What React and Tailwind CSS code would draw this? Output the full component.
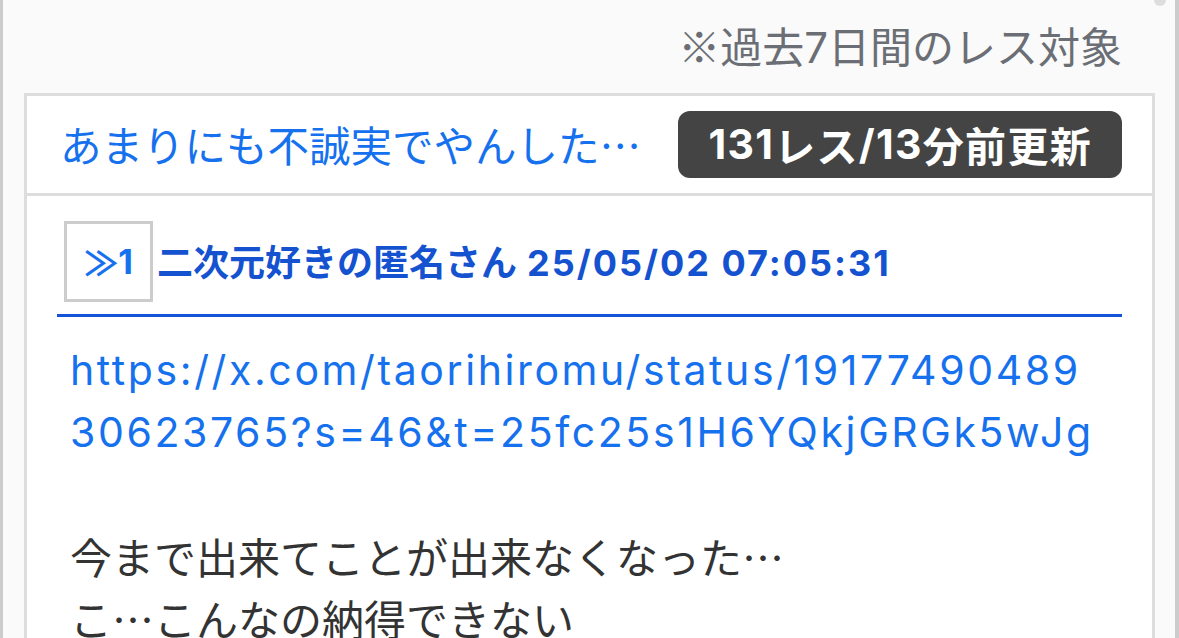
import React from "react";

const App = () => {
  return (
    <div className="relative min-h-screen overflow-hidden bg-[#fafafa] border-l-[3px] border-r-[4px] border-[#cccccc] pl-[21px] pr-[20px] font-['Noto_Sans_CJK_JP',sans-serif]">
      {/* scroll indicator dot */}
      <div className="absolute right-[9px] top-[-6px] w-[12px] h-[12px] rounded-full bg-[#dddddd]" />

      <div className="h-[93px] flex items-center justify-end pr-[33px]">
        <p className="text-[42px] leading-none text-[#6b6f75]">
          ※過去<span className="font-['Inter',sans-serif]">7</span>日間のレス対象
        </p>
      </div>

      <div className="bg-white border-[3px] border-[#dddddd]">
        {/* Thread header */}
        <div className="h-[100px] flex items-center justify-between pl-[33px] pr-[30px] border-b-[3px] border-[#dddddd]">
          <a className="text-[41.5px] leading-none text-[#1671ee] whitespace-nowrap">
            あまりにも不誠実でやんした…
          </a>
          <span className="h-[67px] px-[30px] flex items-center rounded-[12px] bg-[#444444] text-white text-[41px] font-bold leading-none tracking-[1.3px] whitespace-nowrap">
            <span className="font-['Inter',sans-serif]">131</span>レス
            <span className="font-['Inter',sans-serif]">/13</span>分前更新
          </span>
        </div>

        {/* Post */}
        <div className="px-[30px] pt-[25px]">
          <div className="flex items-center border-b-[3px] border-[#1452d8] pb-[12px]">
            <span className="ml-[7px] w-[89px] h-[81px] flex items-center justify-center border-[3px] border-[#cccccc] text-[#1671ee] text-[34px] font-bold leading-none">
              ≫<span className="font-['Inter',sans-serif]">1</span>
            </span>
            <span className="ml-[4px] text-[#1452d0] text-[36px] font-bold leading-none whitespace-nowrap">
              二次元好きの匿名さん
              <span className="ml-[10px] font-['Inter',sans-serif] tracking-[2px]">25/05/02 07:05:31</span>
            </span>
          </div>

          <div className="px-[13px] pt-[22px] text-[42px] leading-[62px] text-[#333333]">
            <a className="block text-[#1671ee] text-[41px] font-['Inter',sans-serif] tracking-[2.6px] whitespace-nowrap">
              https://x.com/taorihiromu/status/19177490489
              <br />
              30623765?s=46&amp;t=25fc25s1H6YQkjGRGk5wJg
            </a>
            <br />
            <p>今まで出来てことが出来なくなった…</p>
            <p>こ…こんなの納得できない</p>
          </div>
        </div>
      </div>
    </div>
  );
};

export default App;
